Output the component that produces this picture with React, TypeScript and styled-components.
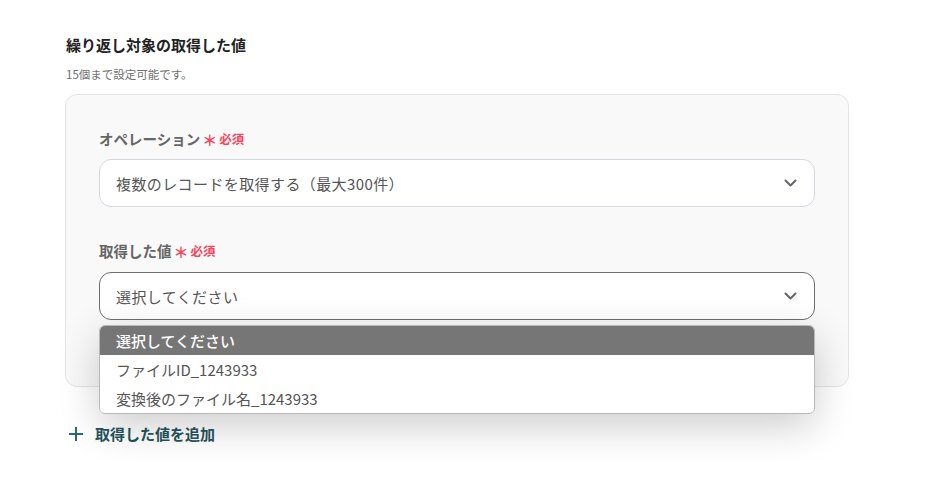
import React from "react";
import styled, { createGlobalStyle } from "styled-components";

const Global = createGlobalStyle`
  html, body { margin: 0; padding: 0; background: #ffffff; }
  body { font-family: "Noto Sans CJK JP", "Noto Sans", sans-serif; }
  * { box-sizing: border-box; }
`;

const Page = styled.div`
  padding: 34px 0 0 65px;
  width: 944px;
  height: 500px;
  overflow: hidden;
`;

const Title = styled.div`
  font-size: 15px;
  font-weight: 700;
  line-height: 22px;
  color: #222;
  padding-left: 1px;
`;

const Sub = styled.div`
  margin-top: 9px;
  font-size: 11.5px;
  line-height: 18px;
  color: #707070;
  padding-left: 1px;
`;

const Card = styled.div`
  margin-top: 11px;
  width: 784px;
  background: #f9f9f9;
  border: 1px solid #e4e4e4;
  border-radius: 12px;
  padding: 33px 33px 66px 33px;
  display: flex;
  flex-direction: column;
`;

const Field = styled.div<{ $gap: number }>`
  display: flex;
  flex-direction: column;
  gap: ${(p) => p.$gap}px;
  position: relative;
  & + & {
    margin-top: 33px;
  }
`;

const Label = styled.div`
  display: flex;
  align-items: center;
  font-size: 14.5px;
  font-weight: 700;
  line-height: 22px;
  color: #666;
`;

const Req = styled.span`
  color: #f5455c;
  font-size: 12.5px;
  font-weight: 700;
  margin-left: 2px;
  display: inline-flex;
  align-items: center;
  gap: 2px;
`;

const Star = styled.span`
  font-size: 15px;
  line-height: 1;
`;

const Select = styled.div<{ $focused?: boolean }>`
  height: 48px;
  background: #fff;
  border: 1px solid ${(p) => (p.$focused ? "#6e6e6e" : "#d3d7de")};
  border-radius: 12px;
  display: flex;
  align-items: center;
  justify-content: space-between;
  padding: 0 17px 0 16px;
  font-size: 15px;
  letter-spacing: 0.4px;
  color: #555;
`;

const Menu = styled.div`
  position: absolute;
  left: 0;
  right: 0;
  top: calc(100% + 5px);
  background: #fff;
  border: 1px solid #b8b8b8;
  border-radius: 6px;
  overflow: hidden;
  box-shadow: 0 12px 40px rgba(0, 0, 0, 0.2);
  z-index: 2;
`;

const Item = styled.div<{ $active?: boolean }>`
  height: 29px;
  display: flex;
  align-items: center;
  padding-left: 16px;
  font-size: 15px;
  color: ${(p) => (p.$active ? "#fff" : "#555")};
  background: ${(p) => (p.$active ? "#767676" : "#fff")};
  font-weight: ${(p) => (p.$active ? 500 : 400)};
`;

const AddButton = styled.div`
  margin-top: 36px;
  display: flex;
  align-items: center;
  gap: 12px;
  padding-left: 4px;
  font-size: 15px;
  font-weight: 700;
  line-height: 22px;
  color: #25535e;
`;

const Chevron = () => (
  <svg width="13" height="8" viewBox="0 0 13 8" fill="none" stroke="#666" strokeWidth="2" strokeLinecap="round" strokeLinejoin="round">
    <path d="M1.5 1.5l5 5 5-5" />
  </svg>
);

const Plus = () => (
  <svg width="14" height="14" viewBox="0 0 14 14" fill="none" stroke="#2b6875" strokeWidth="2">
    <path d="M7 0v14M0 7h14" />
  </svg>
);

export default function App() {
  return (
    <>
      <Global />
      <Page>
        <Title>繰り返し対象の取得した値</Title>
        <Sub>15個まで設定可能です。</Sub>
        <Card>
          <Field $gap={9}>
            <Label>
              オペレーション
              <Req>
                <Star>＊</Star>必須
              </Req>
            </Label>
            <Select>
              複数のレコードを取得する（最大300件）
              <Chevron />
            </Select>
          </Field>
          <Field $gap={10}>
            <Label>
              取得した値
              <Req>
                <Star>＊</Star>必須
              </Req>
            </Label>
            <Select $focused>
              選択してください
              <Chevron />
            </Select>
            <Menu>
              <Item $active>選択してください</Item>
              <Item>ファイルID_1243933</Item>
              <Item>変換後のファイル名_1243933</Item>
            </Menu>
          </Field>
        </Card>
        <AddButton>
          <Plus />
          取得した値を追加
        </AddButton>
      </Page>
    </>
  );
}
